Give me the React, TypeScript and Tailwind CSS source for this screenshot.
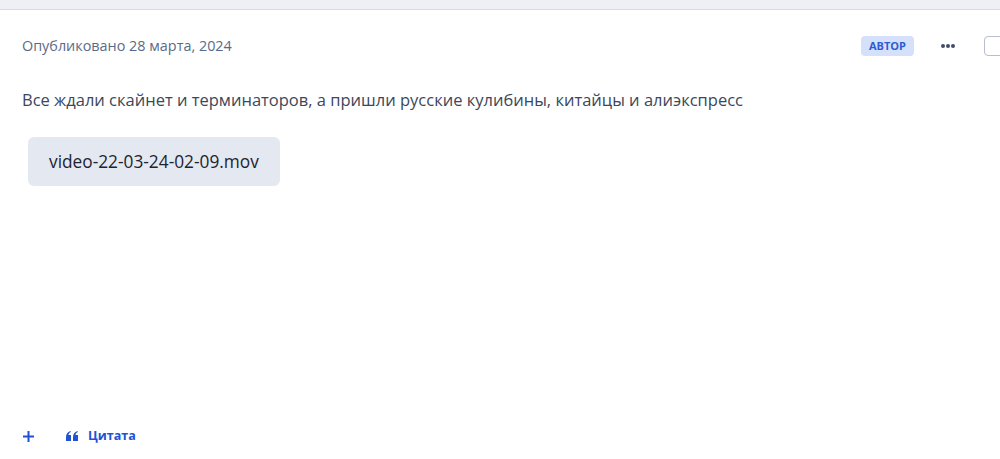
export default function App() {
  return (
    <main className="flex h-[459px] w-[1000px] flex-col overflow-hidden bg-white font-['Open_Sans',sans-serif]">
      <div className="h-[10px] shrink-0 border-b border-[#d8dce6] bg-[#eef0f5]" />
      <article className="flex flex-1 flex-col">
        <header className="flex h-[70px] items-center pl-[22px] pt-[2px]">
          <span className="flex-1 text-[14.4px] text-[#5b6b86]">Опубликовано 28 марта, 2024</span>
          <span className="rounded-[4px] bg-[#d5e1fa] px-[8px] py-[2px] text-[11px] font-bold leading-[16px] text-[#2d5bd3]">
            АВТОР
          </span>
          <button className="ml-[27px] flex gap-[1px]">
            <span className="h-[4px] w-[4px] rounded-full bg-[#3f4e68]" />
            <span className="h-[4px] w-[4px] rounded-full bg-[#3f4e68]" />
            <span className="h-[4px] w-[4px] rounded-full bg-[#3f4e68]" />
          </button>
          <span className="ml-[29px] mr-[-8px] h-[20px] w-[24px] shrink-0 rounded-[4px] border border-[#b8bfcc] bg-white" />
        </header>
        <p className="pl-[22px] pt-[8px] text-[16.5px] leading-[24px] text-[#3b475a]">
          Все ждали скайнет и терминаторов, а пришли русские кулибины, китайцы и алиэкспресс
        </p>
        <div className="pl-[28px] pt-[25px]">
          <div className="inline-flex h-[49px] items-center rounded-[6px] bg-[#e4e8f0] px-[21px] text-[17.3px] text-[#1c2331]">
            video-22-03-24-02-09.mov
          </div>
        </div>
        <div className="flex-1" />
        <footer className="flex h-[44px] items-center pb-[2px] pl-[22px]">
          <svg width="13" height="13" viewBox="0 0 13 13" className="text-[#2152d6]">
            <path d="M6.5 1v11M1 6.5h11" stroke="currentColor" strokeWidth="2" />
          </svg>
          <button className="ml-[31px] flex items-center gap-[10px] text-[12.5px] font-bold text-[#2152d6]">
            <svg width="12" height="10" viewBox="0 0 12 10" fill="currentColor">
              <path d="M0 6.2C0 3 1.6 1 4.4 0l.5 1C3.4 1.7 2.6 2.7 2.5 4H5v6H0zM7 6.2C7 3 8.6 1 11.4 0l.5 1C10.4 1.7 9.6 2.7 9.5 4H12v6H7z" />
            </svg>
            Цитата
          </button>
        </footer>
      </article>
    </main>
  );
}
